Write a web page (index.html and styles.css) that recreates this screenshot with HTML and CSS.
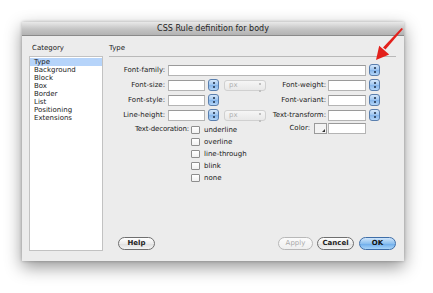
FILE: index.html
```html
<!DOCTYPE html>
<html>
<head>
<meta charset="utf-8">
<title>CSS Rule definition for body</title>
<link rel="stylesheet" href="styles.css">
</head>
<body>
<div class="window">
  <div class="titlebar">CSS Rule definition for body</div>
  <div class="content">
    <div class="category">
      <div class="cat-title">Category</div>
      <ul class="cat-list">
        <li class="selected">Type</li>
        <li>Background</li>
        <li>Block</li>
        <li>Box</li>
        <li>Border</li>
        <li>List</li>
        <li>Positioning</li>
        <li>Extensions</li>
      </ul>
    </div>
    <div class="panel">
      <div class="panel-title">Type</div>
      <div class="form">
        <span class="lbl">Font-family:</span>
        <span class="field field-wide"></span>
        <span class="stepper step2"></span>

        <span class="lbl">Font-size:</span>
        <span class="field"></span>
        <span class="stepper"></span>
        <span class="select">px</span>
        <span class="lbl lbl2">Font-weight:</span>
        <span class="field field2"></span>
        <span class="stepper"></span>

        <span class="lbl">Font-style:</span>
        <span class="field"></span>
        <span class="stepper"></span>
        <span class="empty"></span>
        <span class="lbl lbl2">Font-variant:</span>
        <span class="field field2"></span>
        <span class="stepper"></span>

        <span class="lbl">Line-height:</span>
        <span class="field"></span>
        <span class="stepper"></span>
        <span class="select">px</span>
        <span class="lbl lbl2">Text-transform:</span>
        <span class="field field2"></span>
        <span class="stepper"></span>
      </div>
      <div class="lower">
        <div class="decoration">
          <span class="dec-lbl">Text-decoration:</span>
          <ul class="checks">
            <li><span class="box"></span>underline</li>
            <li><span class="box"></span>overline</li>
            <li><span class="box"></span>line-through</li>
            <li><span class="box"></span>blink</li>
            <li><span class="box"></span>none</li>
          </ul>
        </div>
        <div class="color">
          <span class="color-lbl">Color:</span>
          <span class="swatch"></span>
          <span class="field field2"></span>
        </div>
      </div>
      <div class="buttons">
        <button class="btn help">Help</button>
        <span class="spacer"></span>
        <button class="btn disabled">Apply</button>
        <button class="btn">Cancel</button>
        <button class="btn ok">OK</button>
      </div>
    </div>
  </div>
</div>
<svg class="arrow" width="433" height="293" viewBox="0 0 433 293">
  <path d="M403 29 L385.5 49.5 L383 47.5 L401.5 28 Z" fill="#e3201b"/>
  <polygon points="376,60 379.2,45.8 389.2,54.4" fill="#e3201b"/>
</svg>
</body>
</html>
```
FILE: styles.css
```css
* { box-sizing: border-box; }
html, body { margin: 0; padding: 0; }
body {
  width: 433px;
  height: 293px;
  background: #ffffff;
  font-family: "DejaVu Sans", "Liberation Sans", sans-serif;
  font-size: 7px;
  color: #1a1a1a;
  overflow: hidden;
  position: relative;
}
.window {
  margin: 22px 0 0 22px;
  width: 382px;
  height: 239px;
  background: #ececec;
  display: flex;
  flex-direction: column;
  box-shadow: 0 6px 16px rgba(0,0,0,0.42), 0 0 3px rgba(0,0,0,0.25);
}
.titlebar {
  height: 14px;
  flex: none;
  background: linear-gradient(#e9e9e9, #c4c4c4 55%, #b3b3b3);
  border-bottom: 1px solid #8a8a8a;
  text-align: center;
  font-size: 8px;
  line-height: 14px;
  color: #1e1e1e;
}
.content {
  flex: 1;
  display: flex;
  padding: 7px 8px 10px 7px;
  gap: 6px;
}
.category {
  width: 74px;
  display: flex;
  flex-direction: column;
}
.cat-title {
  line-height: 10px;
  padding-left: 3px;
  margin-bottom: 3px;
}
.cat-list {
  flex: 1;
  list-style: none;
  margin: 0;
  padding: 1px 0 0 0;
  background: #fff;
  border: 1px solid #c2c2c2;
}
.cat-list li {
  line-height: 8px;
  height: 8px;
  padding-left: 4px;
}
.cat-list li.selected {
  background: #b6d4fa;
}
.panel {
  flex: 1;
  display: flex;
  flex-direction: column;
}
.panel-title {
  line-height: 10px;
  padding-bottom: 3px;
  border-bottom: 1px solid #b9b9b9;
}
.form {
  margin-top: 7px;
  display: grid;
  grid-template-columns: 59px 40px 16px 42px 62px 41px 12px;
  grid-auto-rows: 12px;
  row-gap: 3px;
  align-items: center;
}
.lbl {
  text-align: right;
  padding-right: 3px;
  white-space: nowrap;
}
.lbl2 { padding-right: 2px; }
.field {
  display: block;
  width: 37px;
  height: 11px;
  background: #fff;
  border: 1px solid #b4b4b4;
  border-top-color: #9a9a9a;
}
.field-wide {
  grid-column: 2 / 7;
  width: 198px;
}
.field2 { width: 38px; }
.stepper {
  display: block;
  width: 11px;
  height: 12px;
  border-radius: 3px;
  border: 1px solid #5a7fae;
  background: linear-gradient(#d6e8fb, #9cc4ef 50%, #84b4ea 51%, #b4d6f8);
  position: relative;
}
.stepper::before, .stepper::after {
  content: "";
  position: absolute;
  left: 3.5px;
  width: 2px;
  height: 2px;
  background: #1b2c44;
  border-radius: 1px;
}
.stepper::before { top: 2px; }
.stepper::after { bottom: 2px; }
.select {
  display: block;
  width: 42px;
  height: 11px;
  border: 1px solid #d0d0d0;
  border-radius: 3px;
  background: linear-gradient(#f6f6f6, #e8e8e8);
  color: #b0b0b0;
  line-height: 9px;
  padding-left: 4px;
  position: relative;
}
.select::after {
  content: "";
  position: absolute;
  right: 4px;
  top: 2px;
  width: 2px;
  height: 5px;
  border-top: 2px solid #c0c0c0;
  border-bottom: 2px solid #c0c0c0;
}
.lower {
  display: flex;
  margin-top: 1px;
}
.decoration {
  width: 157px;
  display: flex;
  padding-top: 2px;
}
.dec-lbl {
  width: 82px;
  text-align: right;
  padding-right: 2px;
  line-height: 11px;
  letter-spacing: -0.15px;
  white-space: nowrap;
}
.checks {
  list-style: none;
  margin: 0;
  padding: 0;
}
.checks li {
  display: flex;
  align-items: center;
  height: 12px;
  line-height: 11px;
}
.box {
  display: block;
  width: 9px;
  height: 8px;
  background: linear-gradient(#fff, #f0f0f0);
  border: 1px solid #8e8e8e;
  border-radius: 1px;
  margin-right: 4px;
}
.color {
  display: flex;
  align-items: center;
  height: 12px;
}
.color-lbl {
  width: 48px;
  text-align: right;
  padding-right: 4px;
}
.swatch {
  display: block;
  width: 13px;
  height: 11px;
  border: 1px solid #9a9a9a;
  background: #f3f3f3;
  margin-right: 1px;
  position: relative;
}
.swatch::after {
  content: "";
  position: absolute;
  right: 1px;
  bottom: 1px;
  border-left: 3px solid transparent;
  border-bottom: 3px solid #333;
}
.buttons {
  margin-top: auto;
  display: flex;
  align-items: center;
  gap: 4px;
  padding-left: 9px;
  padding-bottom: 1px;
}
.spacer { flex: 1; }
.btn {
  height: 13px;
  width: 37px;
  padding: 0;
  border-radius: 7px;
  border: 1px solid #6f6f6f;
  background: linear-gradient(#ffffff, #ececec 50%, #dedede 51%, #f4f4f4);
  font-family: "DejaVu Sans", "Liberation Sans", sans-serif;
  font-size: 7px;
  font-weight: bold;
  color: #222;
  line-height: 11px;
}
.btn.disabled {
  width: 35px;
  border-color: #b8b8b8;
  color: #aaaaaa;
  font-weight: normal;
  background: linear-gradient(#fbfbfb, #efefef);
}
.btn.ok {
  margin-left: 1px;
  border-color: #3f6ea8;
  background: linear-gradient(#cfe5fb, #8cc0ef 50%, #6aaaea 51%, #a8d4f8);
  color: #111;
}
.arrow {
  position: absolute;
  left: 0;
  top: 0;
  pointer-events: none;
}
```
